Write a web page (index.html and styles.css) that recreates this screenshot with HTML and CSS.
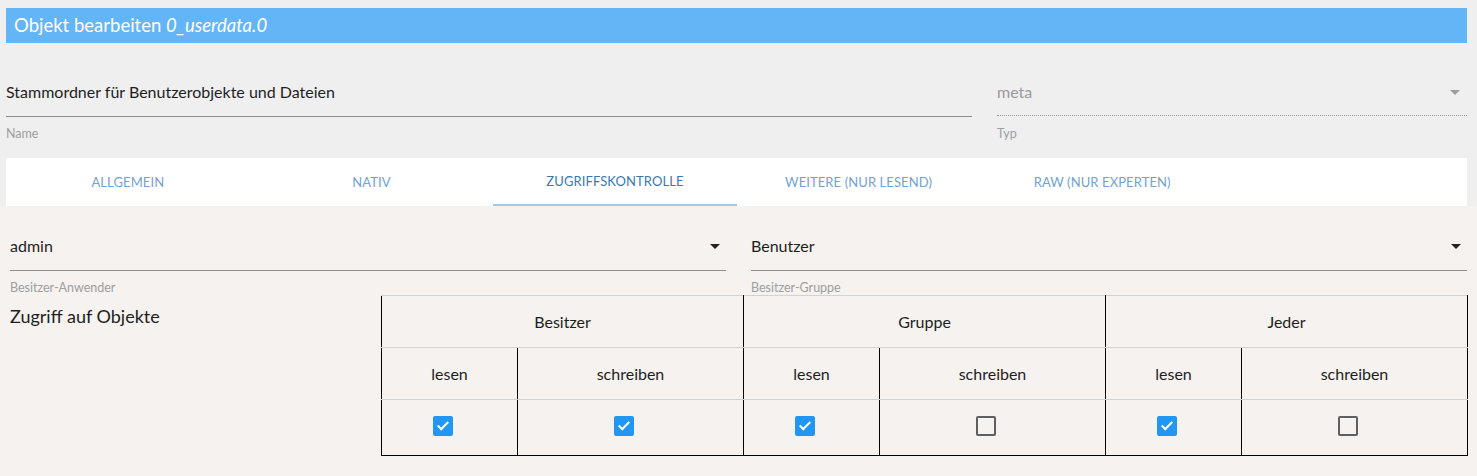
FILE: index.html
```html
<!DOCTYPE html>
<html lang="de">
<head>
<meta charset="utf-8">
<title>Objekt bearbeiten</title>
<link rel="stylesheet" href="styles.css">
</head>
<body>
<div class="page">
  <div class="top">
    <div class="titlebar">Objekt bearbeiten <i>0_userdata.0</i></div>
    <div class="fields">
      <div class="field name">
        <div class="value">Stammordner für Benutzerobjekte und Dateien</div>
        <div class="label">Name</div>
      </div>
      <div class="field typ">
        <div class="value disabled">meta<span class="arrow grey"></span></div>
        <div class="label">Typ</div>
      </div>
    </div>
    <div class="tabs">
      <div class="tab">ALLGEMEIN</div>
      <div class="tab">NATIV</div>
      <div class="tab active">ZUGRIFFSKONTROLLE</div>
      <div class="tab">WEITERE (NUR LESEND)</div>
      <div class="tab">RAW (NUR EXPERTEN)</div>
    </div>
  </div>
  <div class="content">
    <div class="selects">
      <div class="sel">
        <div class="value">admin<span class="arrow"></span></div>
        <div class="label">Besitzer-Anwender</div>
      </div>
      <div class="sel">
        <div class="value">Benutzer<span class="arrow"></span></div>
        <div class="label">Besitzer-Gruppe</div>
      </div>
    </div>
    <div class="access">
      <div class="access-title">Zugriff auf Objekte</div>
      <table class="acl">
        <colgroup>
          <col class="c-l"><col class="c-s">
          <col class="c-l"><col class="c-s">
          <col class="c-l"><col class="c-s">
        </colgroup>
        <tr class="r1">
          <td colspan="2">Besitzer</td>
          <td colspan="2">Gruppe</td>
          <td colspan="2">Jeder</td>
        </tr>
        <tr class="r2">
          <td>lesen</td><td>schreiben</td>
          <td>lesen</td><td>schreiben</td>
          <td>lesen</td><td>schreiben</td>
        </tr>
        <tr class="r3">
          <td><span class="cb on"></span></td>
          <td><span class="cb on"></span></td>
          <td><span class="cb on"></span></td>
          <td><span class="cb"></span></td>
          <td><span class="cb on"></span></td>
          <td><span class="cb"></span></td>
        </tr>
      </table>
    </div>
  </div>
</div>
</body>
</html>
```
FILE: styles.css
```css
html, body {
  margin: 0;
  padding: 0;
}
body {
  background: #f5f2ef;
  font-family: Lato, "Noto Sans", sans-serif;
  color: #1e1e1e;
  width: 1477px;
  height: 476px;
  overflow: hidden;
}
.top {
  background: #efefef;
  padding: 8px 10px 0 6px;
}
.titlebar {
  background: #64b5f6;
  color: #fff;
  font-size: 18.5px;
  height: 35px;
  line-height: 35px;
  padding-left: 8px;
}
.fields {
  display: flex;
  gap: 25px;
  padding-top: 37px;
}
.field .value {
  font-size: 16px;
  height: 36px;
  line-height: 24px;
  border-bottom: 1px solid #8f8f8f;
  position: relative;
}
.field.name { flex: 0 0 966px; }
.field.typ { flex: 1; }
.field .value.disabled {
  color: #9a9a9a;
  border-bottom: 1px dotted #9a9a9a;
  height: 35px;
}
.field .value.disabled + .label { padding-top: 10px; }
.label {
  font-size: 12.5px;
  color: #9e9e9e;
  padding-top: 9px;
  height: 16px;
  line-height: 16px;
}
.arrow {
  position: absolute;
  right: 6px;
  top: 10px;
  width: 0;
  height: 0;
  border-left: 5px solid transparent;
  border-right: 5px solid transparent;
  border-top: 5px solid #222;
}
.arrow.grey { border-top-color: #9e9e9e; right: 7px; }
.tabs {
  margin-top: 16px;
  background: #fff;
  display: flex;
  height: 48px;
}
.tab {
  width: 243.6px;
  text-align: center;
  font-size: 13px;
  line-height: 48px;
  color: #72a3d3;
  box-sizing: border-box;
  letter-spacing: 0.1px;
}
.tab.active {
  color: #3a78b5;
  border-bottom: 2px solid #9ecaf0;
  line-height: 46px;
}
.content {
  padding: 0 10px 0 10px;
}
.selects {
  display: flex;
  gap: 25px;
  padding-top: 28px;
}
.sel { flex: 1; }
.sel .value {
  font-size: 16px;
  height: 36px;
  line-height: 24px;
  border-bottom: 1px solid #8f8f8f;
  position: relative;
}
.sel .arrow { right: 6px; top: 10px; }
.sel .label { padding-top: 10px; height: 14px; line-height: 14px; }
.access {
  display: flex;
  align-items: flex-start;
}
.access-title {
  font-size: 18px;
  line-height: 20px;
  flex: 0 0 371px;
  padding-top: 11px;
}
.acl {
  border-collapse: collapse;
  border: 1px solid #000;
  width: 1086px;
  font-size: 16px;
  table-layout: fixed;
}
.acl col.c-l { width: 136px; }
.acl col.c-s { width: 226px; }
.acl td {
  text-align: center;
  padding: 0;
  border-left: 1px solid #000;
  border-right: 1px solid #000;
  border-top: 1px solid #d2d2d2;
  border-bottom: 1px solid #d2d2d2;
}
.acl .r1 td { height: 51px; }
.acl .r2 td { height: 51px; }
.acl .r3 td { height: 56px; border-bottom: 1px solid #000; padding-bottom: 4px; box-sizing: border-box; }
.cb {
  display: inline-block;
  width: 20px;
  height: 20px;
  box-sizing: border-box;
  border: 2px solid #5f5f5f;
  border-radius: 2px;
  vertical-align: middle;
  position: relative;
  margin-right: 14px;
}
.cb.on {
  background: #2196f3;
  border-color: #2196f3;
}
.cb.on::after {
  content: "";
  position: absolute;
  left: 5px;
  top: 1px;
  width: 4px;
  height: 9px;
  border-right: 2px solid #fff;
  border-bottom: 2px solid #fff;
  transform: rotate(45deg);
}
```
